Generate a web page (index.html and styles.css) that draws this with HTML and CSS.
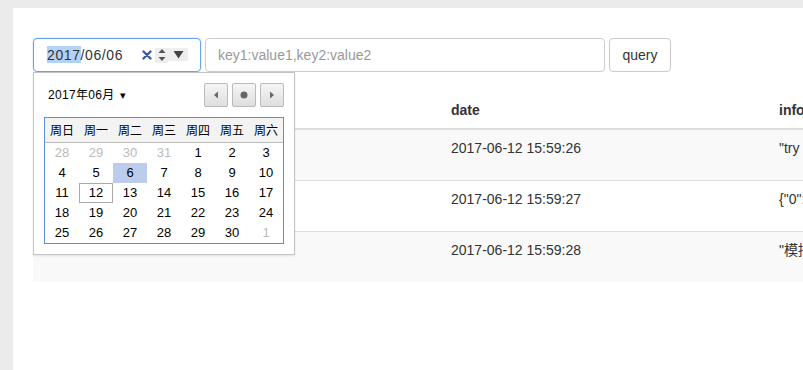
FILE: index.html
```html
<!DOCTYPE html>
<html lang="en">
<head>
    <meta charset="UTF-8">
    <title>Log Query</title>
    <link rel="stylesheet" href="styles.css">
</head>
<body>
    <div class="panel">
        <!-- Search Bar -->
        <div class="search-bar">
            <div class="date-input">
                <span class="date-text"><span class="selected-part">2017</span>/06/06</span>
                <span class="date-clear">
                    <svg width="10" height="10" viewBox="0 0 10 10"><path d="M1.5 1.5 L8.5 8.5 M8.5 1.5 L1.5 8.5" stroke="#3a5c9b" stroke-width="2.4" stroke-linecap="round"/></svg>
                </span>
                <span class="date-spin">
                    <svg width="8" height="14" viewBox="0 0 8 14"><path d="M4 1 L7.5 5 L0.5 5 Z M4 13 L7.5 9 L0.5 9 Z" fill="#555"/></svg>
                </span>
                <span class="date-drop">
                    <svg width="11" height="9" viewBox="0 0 11 9"><path d="M0.5 1 L10.5 1 L5.5 8.5 Z" fill="#444"/></svg>
                </span>
            </div>
            <input class="key-input" type="text" placeholder="key1:value1,key2:value2">
            <button class="query-button">query</button>
        </div>

        <!-- Result Table -->
        <table class="log-table">
            <colgroup>
                <col class="col-level">
                <col class="col-date">
                <col class="col-info">
            </colgroup>
            <thead>
                <tr><th>level</th><th>date</th><th>info</th></tr>
            </thead>
            <tbody>
                <tr><td>info</td><td>2017-06-12 15:59:26</td><td>"try again later"</td></tr>
                <tr><td>debug</td><td>2017-06-12 15:59:27</td><td>{"0":"a","1":"b"}</td></tr>
                <tr><td>info</td><td>2017-06-12 15:59:28</td><td>"模拟日志数据"</td></tr>
            </tbody>
        </table>

        <!-- Date Picker Popup -->
        <div class="picker">
            <div class="picker-head">
                <span class="picker-month">2017年06月<span class="month-caret">&#9662;</span></span>
                <div class="picker-nav">
                    <span class="nav-btn"><svg width="6" height="8" viewBox="0 0 6 8"><path d="M5 0.5 L1 4 L5 7.5 Z" fill="#666"/></svg></span>
                    <span class="nav-btn"><svg width="8" height="8" viewBox="0 0 8 8"><circle cx="4" cy="4" r="3.5" fill="#666"/></svg></span>
                    <span class="nav-btn"><svg width="6" height="8" viewBox="0 0 6 8"><path d="M1 0.5 L5 4 L1 7.5 Z" fill="#666"/></svg></span>
                </div>
            </div>
            <div class="picker-grid">
                <div class="week-row">
                    <span>周日</span><span>周一</span><span>周二</span><span>周三</span><span>周四</span><span>周五</span><span>周六</span>
                </div>
                <div class="day-grid" id="day-grid"></div>
            </div>
        </div>
    </div>

    <script>
        // June 2017 starts on Thursday, pad with May and July days
        const dayGrid = document.getElementById("day-grid");
        const days = [];
        [28, 29, 30, 31].forEach(d => days.push({ n: d, other: true }));
        for (let d = 1; d <= 30; d++) days.push({ n: d });
        days.push({ n: 1, other: true });

        days.forEach(day => {
            const cell = document.createElement("span");
            cell.className = "day";
            if (day.other) cell.classList.add("other-month");
            if (!day.other && day.n === 6) cell.classList.add("selected");
            if (!day.other && day.n === 12) cell.classList.add("today");
            cell.textContent = day.n;
            dayGrid.appendChild(cell);
        });
    </script>
</body>
</html>
```

FILE: styles.css
```css
/* Reset */
* {
    margin: 0;
    padding: 0;
    box-sizing: border-box;
}

body {
    font-family: "Liberation Sans", Arial, "Noto Sans CJK SC", sans-serif;
    font-size: 14px;
    line-height: 20px;
    color: #333;
    background-color: #ebebeb;
    overflow: hidden;
}

/* Panel */
.panel {
    position: relative;
    width: 1200px;
    min-height: 400px;
    margin: 8px 0 0 13px;
    padding: 30px 0 0 20px;
    background-color: #fff;
}

/* Search Bar */
.search-bar {
    display: flex;
    gap: 4px;
    height: 34px;
}

.date-input {
    display: flex;
    align-items: center;
    width: 168px;
    height: 34px;
    padding: 0 12px 0 13px;
    border: 1px solid #66a3ea;
    border-radius: 4px;
    box-shadow: 0 0 2px rgba(102, 163, 234, 0.5);
}

.date-text {
    width: 95px;
    color: #333;
    letter-spacing: 0.6px;
}

.selected-part {
    background-color: #b3d2f7;
    padding: 1px 0 0;
}

.date-clear {
    display: flex;
    align-items: center;
    width: 12px;
    margin-right: 1px;
}

.date-spin {
    display: flex;
    align-items: center;
    justify-content: center;
    width: 13px;
    height: 15px;
    background-color: #eee;
}

.date-drop {
    display: flex;
    align-items: flex-start;
    justify-content: center;
    width: 20px;
    height: 13px;
    padding-top: 2px;
    margin-top: -2px;
    background-color: #eee;
}

.key-input {
    width: 400px;
    height: 34px;
    padding: 6px 12px;
    border: 1px solid #ccc;
    border-radius: 4px;
    font-family: inherit;
    font-size: 14px;
    color: #333;
    outline: none;
}

.key-input::placeholder {
    color: #999;
}

.query-button {
    width: 62px;
    height: 34px;
    border: 1px solid #ccc;
    border-radius: 4px;
    background-color: #fff;
    font-family: inherit;
    font-size: 14px;
    color: #333;
}

/* Table */
.log-table {
    margin-top: 20px;
    border-collapse: collapse;
    table-layout: fixed;
    width: 1138px;
}

.col-level { width: 410px; }
.col-date { width: 328px; }
.col-info { width: 400px; }

.log-table th {
    padding: 8px;
    text-align: left;
    font-weight: bold;
    border-bottom: 2px solid #ddd;
}

.log-table td {
    padding: 8px 8px 22px;
    vertical-align: top;
    border-top: 1px solid #ddd;
    white-space: nowrap;
}

.log-table tbody tr:nth-child(odd) {
    background-color: #f9f9f9;
}

/* Date Picker */
.picker {
    position: absolute;
    top: 64px;
    left: 20px;
    width: 262px;
    padding: 10px;
    background-color: #fff;
    border: 1px solid #c4c4c4;
    box-shadow: 0 1px 2px rgba(0, 0, 0, 0.1);
    font-size: 13px;
    color: #000;
}

.picker-head {
    display: flex;
    justify-content: space-between;
    align-items: center;
    height: 24px;
    margin-bottom: 10px;
}

.picker-month {
    padding-left: 4px;
    font-size: 12px;
    letter-spacing: 0.3px;
}

.month-caret {
    font-size: 11px;
    margin-left: 6px;
}

.picker-nav {
    display: flex;
    gap: 4px;
}

.nav-btn {
    display: flex;
    align-items: center;
    justify-content: center;
    width: 24px;
    height: 24px;
    border: 1px solid #bbb;
    border-radius: 2px;
    background: linear-gradient(#f6f6f6, #dedede);
}

.picker-grid {
    border: 1px solid #5b8fe6;
}

.week-row {
    display: grid;
    grid-template-columns: repeat(7, 34px);
    height: 25px;
    background-color: #f3f3f3;
    border-bottom: 1px solid #bbb;
    font-family: "Noto Sans CJK SC", sans-serif;
    font-size: 12px;
    line-height: 24px;
    text-align: center;
}

.day-grid {
    display: grid;
    grid-template-columns: repeat(7, 34px);
    grid-auto-rows: 20px;
}

.day {
    text-align: center;
    line-height: 20px;
}

.day.other-month {
    color: #bbb;
}

.day.selected {
    background-color: #bccced;
}

.day.today {
    border: 1px solid #aaa;
    line-height: 18px;
}
```
